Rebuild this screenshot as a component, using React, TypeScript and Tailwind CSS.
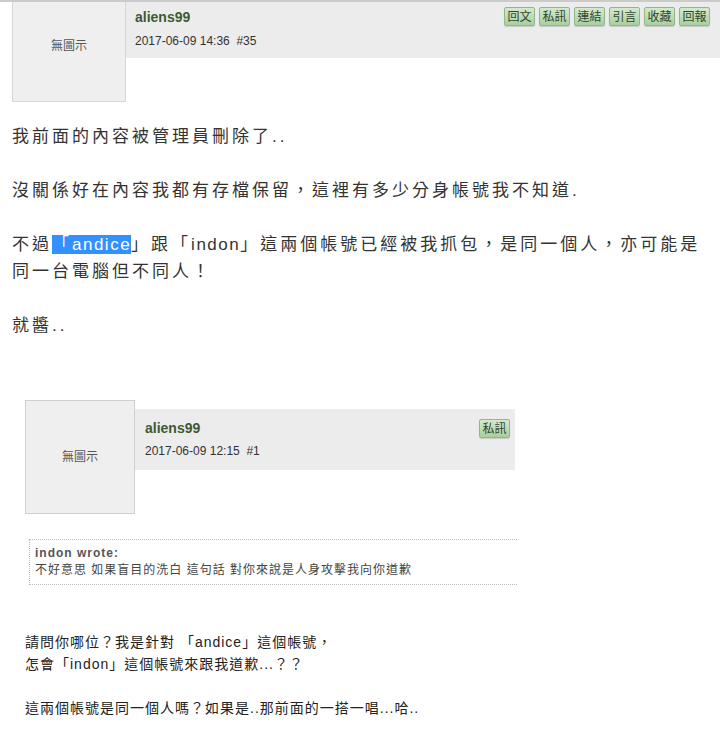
const cjk = "font-['Liberation_Sans','Noto_Sans_CJK_TC',sans-serif]"

function PostButton({ label }: { label: string }) {
  return (
    <span className="flex h-[19px] w-[31px] items-center justify-center rounded-[2px] border border-[#93b78a] bg-gradient-to-b from-[#d4eacd] to-[#a8cf9e] text-[12px] leading-none text-[#34432f] shadow-[0_1px_1px_rgba(0,0,0,0.15)]">
      {label}
    </span>
  )
}

export default function App() {
  return (
    <div className={`min-h-[743px] w-[720px] bg-white ${cjk}`}>
      {/* top rule */}
      <div className="h-[2px] bg-[#cbcbcb]" />

      {/* ─── Post header ─── */}
      <div className="flex pl-[12px]">
        <div className="flex h-[100px] w-[114px] shrink-0 justify-center border border-t-0 border-[#d6d6d6] bg-[#efefef] pt-[35px] text-[12px] text-[#555]">
          無圖示
        </div>
        <div className="flex h-[56px] flex-1 items-start bg-[#ececec] pl-[9px] pr-[10px]">
          <div className="flex-1 pt-[6px]">
            <div className="text-[14px] font-bold leading-[18px] text-[#3c5a33]">aliens99</div>
            <div className="mt-[7px] text-[12px] leading-[16px] text-[#333]">2017-06-09 14:36&nbsp;&nbsp;#35</div>
          </div>
          <div className="mt-[5px] flex gap-[4px]">
            {['回文', '私訊', '連結', '引言', '收藏', '回報'].map(l => (
              <PostButton key={l} label={l} />
            ))}
          </div>
        </div>
      </div>

      {/* ─── Post body ─── */}
      <div className="pl-[12px] pr-[18px] pt-[21px] text-[17px] leading-[27px] tracking-[3px] text-[#333]">
        <p>我前面的內容被管理員刪除了..</p>
        <p className="mt-[27px]">沒關係好在內容我都有存檔保留，這裡有多少分身帳號我不知道.</p>
        <p className="mt-[27px]">
          不過<span className="bg-[#3390ff] text-white">「<span className="tracking-[1.5px]">andice</span></span>」跟「<span className="tracking-[1.5px]">indon</span>」這兩個帳號已經被我抓包，是同一個人，亦可能是同一台電腦但不同人！
        </p>
        <p className="mt-[27px]">就醬..</p>
      </div>

      {/* ─── Embedded screenshot ─── */}
      <div className="mt-[61px] pl-[25px]">
        <div className="flex">
          <div className="flex h-[114px] w-[110px] shrink-0 items-center justify-center border border-[#cfcfcf] bg-[#efefef] text-[12px] text-[#555]">
            無圖示
          </div>
          <div className="mt-[9px] flex h-[61px] w-[380px] items-start bg-[#ececec] pl-[10px] pr-[5px]">
            <div className="flex-1 pt-[10px]">
              <div className="text-[14px] font-bold leading-[18px] text-[#3c5a33]">aliens99</div>
              <div className="mt-[6px] text-[12px] leading-[16px] text-[#333]">2017-06-09 12:15&nbsp;&nbsp;#1</div>
            </div>
            <div className="mt-[10px]">
              <PostButton label="私訊" />
            </div>
          </div>
        </div>

        <div className="ml-[4px] mt-[25px] w-[488px] border-y border-l border-dotted border-[#bbb] py-[5px] pl-[5px] text-[12px] leading-[17px] tracking-[1px] text-[#444]">
          <div className="font-bold text-[#555]">indon wrote:</div>
          <div>不好意思 如果盲目的洗白 這句話 對你來說是人身攻擊我向你道歉</div>
        </div>

        <div className="pt-[46px] text-[14px] leading-[22px] tracking-[1px] text-[#222]">
          <p>請問你哪位？我是針對 「andice」這個帳號，</p>
          <p>怎會「indon」這個帳號來跟我道歉...？？</p>
          <p className="mt-[22px]">這兩個帳號是同一個人嗎？如果是..那前面的一搭一唱...哈..</p>
        </div>
      </div>
    </div>
  )
}
